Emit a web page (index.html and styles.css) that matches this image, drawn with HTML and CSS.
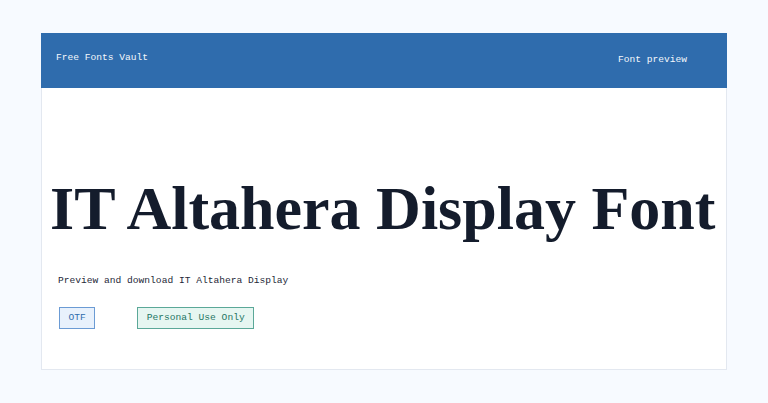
FILE: index.html
```html
<!DOCTYPE html>
<html lang="en">
<head>
    <meta charset="UTF-8">
    <meta name="viewport" content="width=device-width, initial-scale=1.0">
    <title>IT Altahera Display Font</title>
    <link rel="stylesheet" href="styles.css">
</head>
<body>
    <div class="card">
        <header class="topbar">
            <span class="brand">Free Fonts Vault</span>
            <span class="nav">Font preview</span>
        </header>
        <main class="preview">
            <h1 class="font-name">IT Altahera Display Font</h1>
            <p class="lead">Preview and download IT Altahera Display</p>
            <div class="tags">
                <span class="tag tag-format">OTF</span>
                <span class="tag tag-license">Personal Use Only</span>
            </div>
        </main>
    </div>
</body>
</html>
```

FILE: styles.css
```css
* {
    box-sizing: border-box;
}

body {
    margin: 0;
    padding: 33px 41px;
    height: 403px;
    background-color: #f7faff;
    font-family: "Liberation Mono", monospace;
    font-size: 9.6px;
    overflow: hidden;
}

.card {
    height: 337px;
    background-color: #ffffff;
    border: 1px solid #e3e8f0;
    display: flex;
    flex-direction: column;
}

.topbar {
    height: 55px;
    margin: -1px -1px 0;
    background-color: #2f6cad;
    color: #f4f8fc;
    display: flex;
    justify-content: space-between;
    align-items: flex-start;
    padding: 19px 40px 0 15px;
}

.nav {
    margin-top: 2px;
}

.preview {
    padding: 0 16px;
}

.font-name {
    margin: 89px 0 0 -8px;
    font-family: "Liberation Serif", serif;
    font-size: 62px;
    font-weight: bold;
    line-height: 1;
    color: #141c2c;
    white-space: nowrap;
}

.lead {
    margin: 36px 0 0;
    color: #1e2838;
}

.tags {
    display: flex;
    gap: 42px;
    margin: 21px 0 0 1px;
}

.tag {
    padding: 4px 8.5px;
    border: 1px solid;
    line-height: 12px;
}

.tag-format {
    background-color: #e8f1fc;
    border-color: #6b9bd4;
    color: #2f6cad;
}

.tag-license {
    background-color: #e6f6f1;
    border-color: #5ba898;
    color: #1e7563;
}
```
